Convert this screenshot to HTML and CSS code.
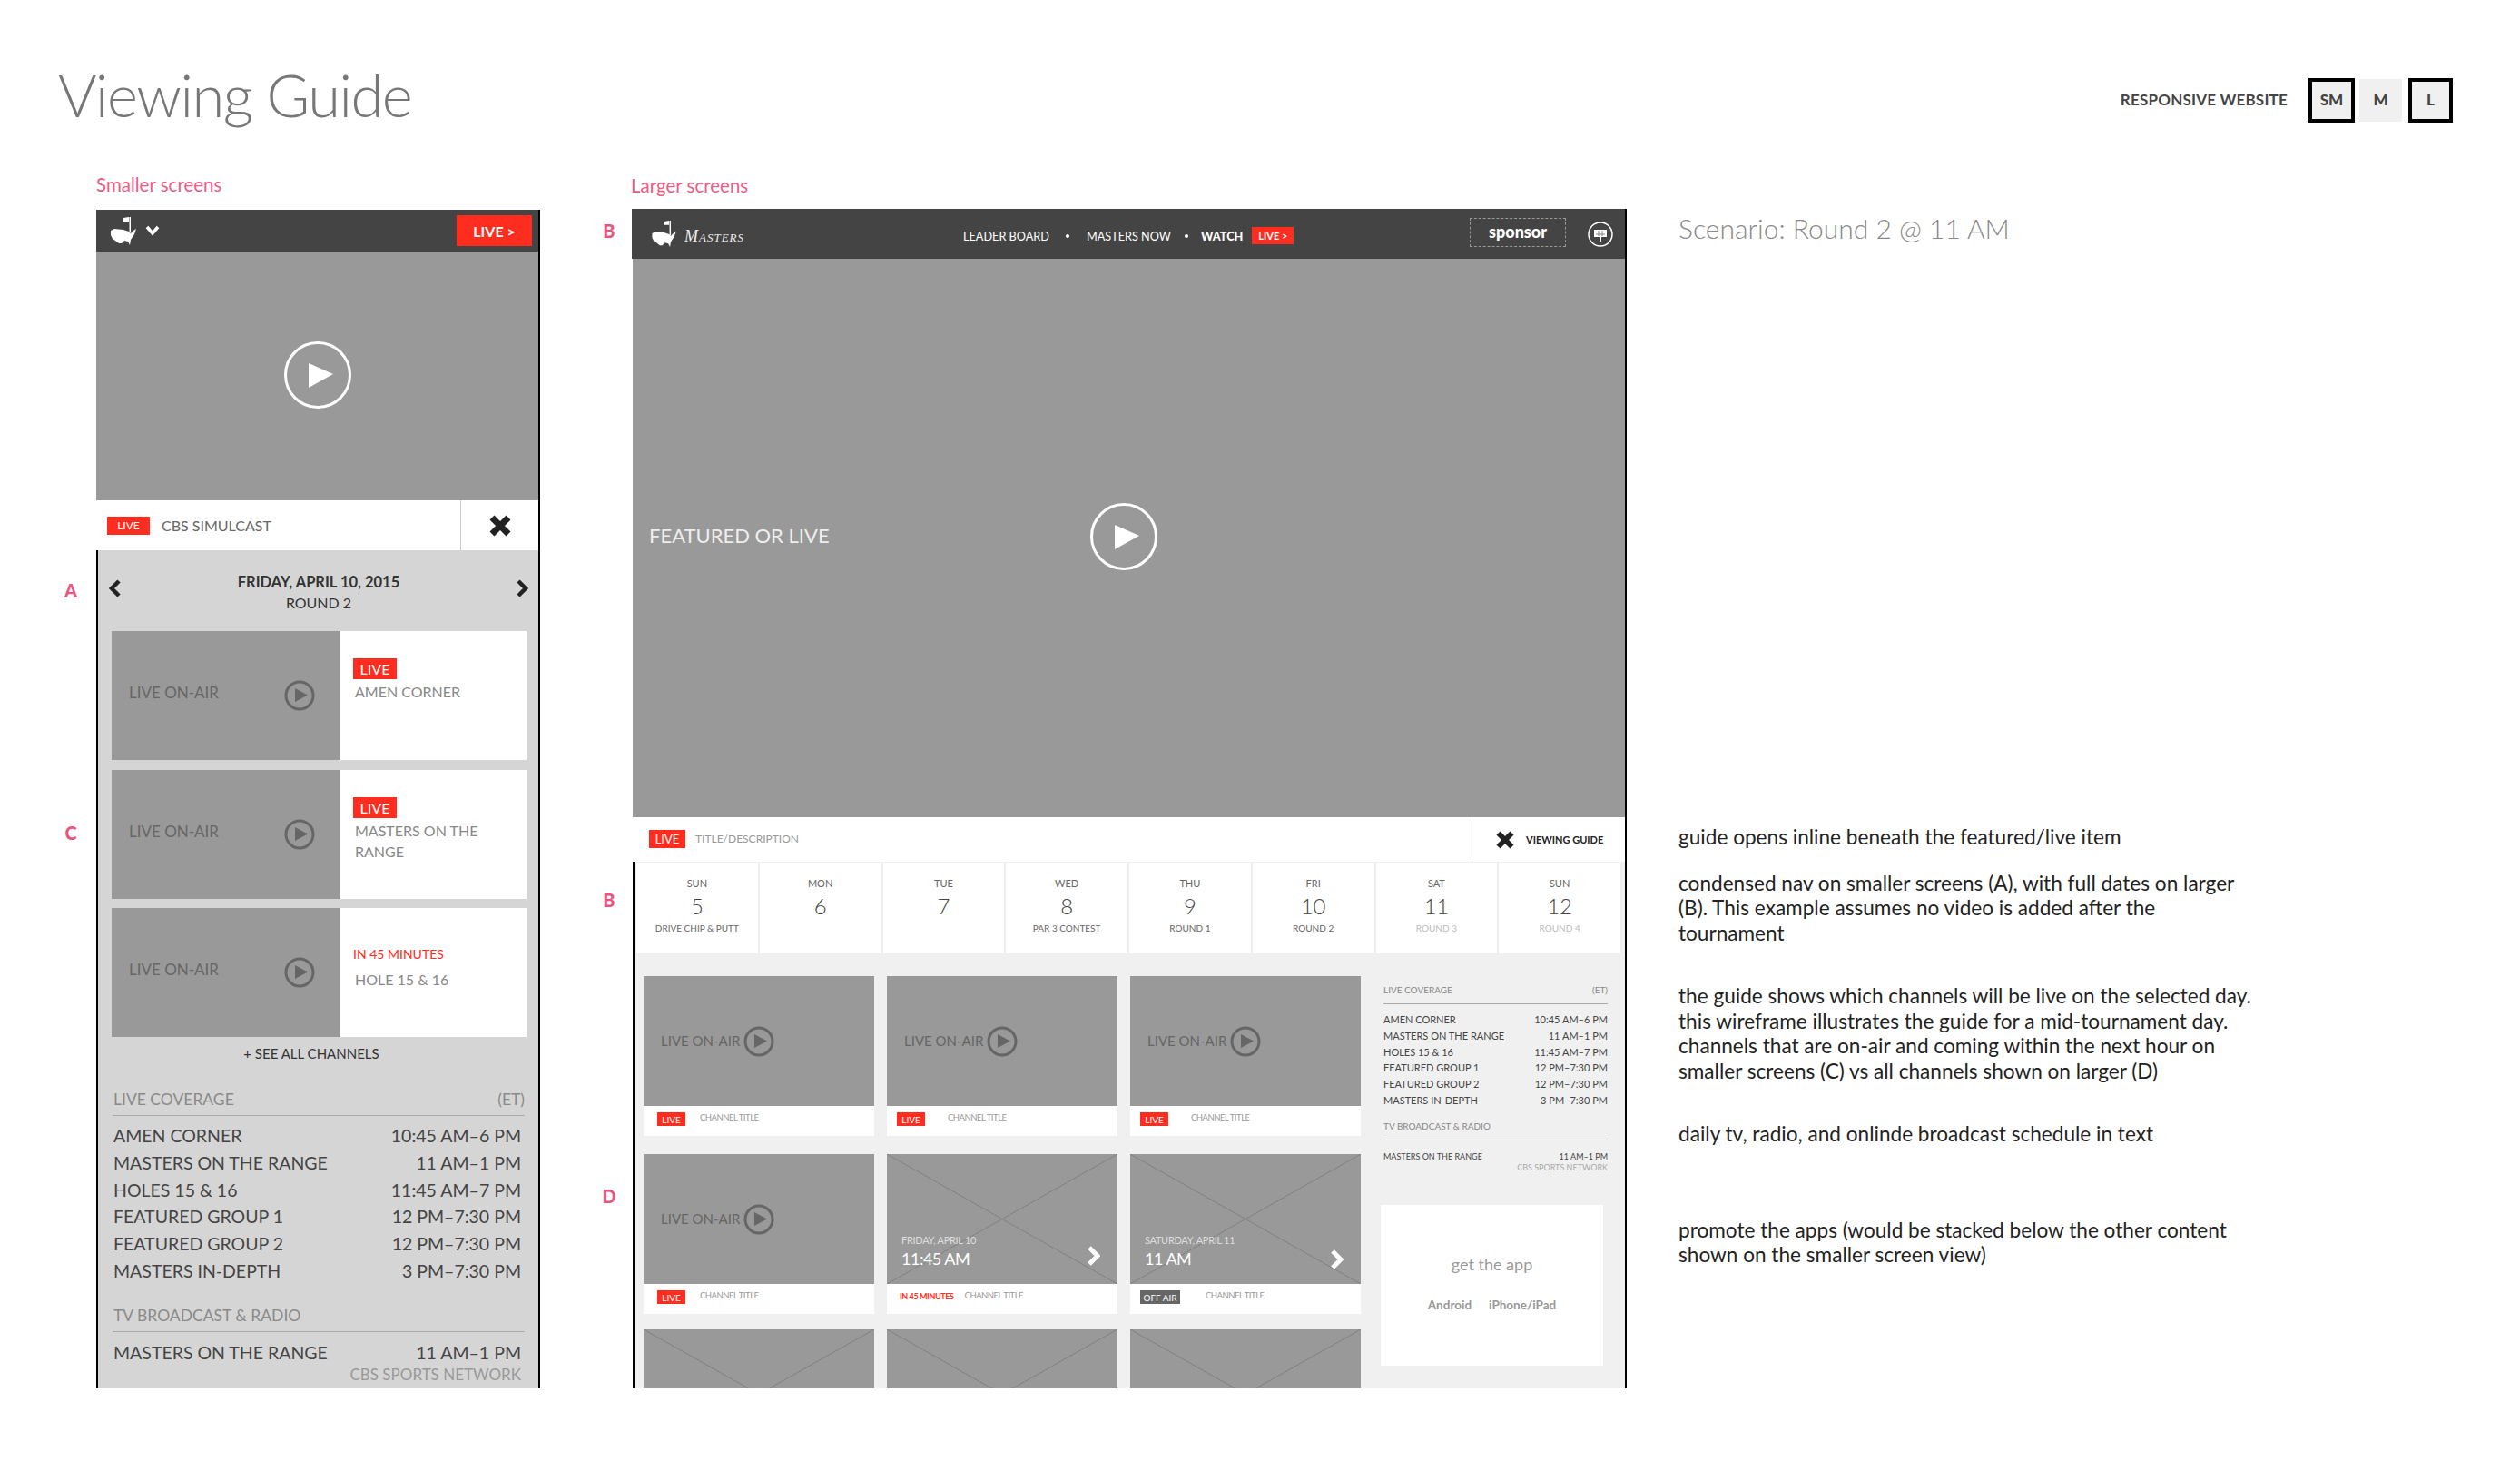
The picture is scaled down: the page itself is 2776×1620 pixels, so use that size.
FILE: index.html
```html
<!DOCTYPE html>
<html lang="en">
<head>
    <meta charset="UTF-8">
    <title>Viewing Guide</title>
    <link rel="stylesheet" href="styles.css">
</head>
<body>

    <svg class="sprite" xmlns="http://www.w3.org/2000/svg">
        <symbol id="logo" viewBox="0 0 28 31">
            <path d="M14 1 L20 0 L20 5 L14 5Z" fill="#fff"/>
            <path d="M20.5 0 H22 V17 H20.5Z" fill="#fff"/>
            <path d="M0 15 L4 13 L14 14 L20 16 L22 18 L25 15 L28 13 L26 19 L24 22 L22 25 L21 31 L19 27 L15 26 L12 29 L9 29 L5 26 L2 24 L0 20Z" fill="#fff"/>
        </symbol>
        <symbol id="play-big" viewBox="0 0 74 74">
            <circle cx="37" cy="37" r="35.5" fill="none" stroke="#fff" stroke-width="3"/>
            <path d="M27 24 L54 36 L27 51Z" fill="#fff"/>
        </symbol>
        <symbol id="play-small" viewBox="0 0 34 34">
            <circle cx="17" cy="17" r="15" fill="none" stroke="#666" stroke-width="3"/>
            <path d="M12 9 L26 16.5 L12 24Z" fill="#666"/>
        </symbol>
        <symbol id="close" viewBox="0 0 24 24">
            <path d="M3 3 L21 21 M21 3 L3 21" fill="none" stroke="#222" stroke-width="7"/>
        </symbol>
        <symbol id="chev-left" viewBox="0 0 14 20">
            <path d="M12 2 L4 10 L12 18" fill="none" stroke="#222" stroke-width="4.5"/>
        </symbol>
        <symbol id="chev-right" viewBox="0 0 14 20">
            <path d="M2 2 L10 10 L2 18" fill="none" stroke="#222" stroke-width="4.5"/>
        </symbol>
        <symbol id="chev-white" viewBox="0 0 14 22">
            <path d="M2 2 L11 11 L2 20" fill="none" stroke="#fff" stroke-width="5"/>
        </symbol>
        <symbol id="cross" viewBox="0 0 254 143" preserveAspectRatio="none">
            <path d="M0 0 L254 143 M254 0 L0 143" fill="none" stroke="#808080" stroke-width="1"/>
        </symbol>
    </svg>

    <div class="page">

        <header class="top">
            <h1 class="title">Viewing Guide</h1>
            <div class="sizes">
                <span class="sizes-label">RESPONSIVE WEBSITE</span>
                <span class="size size-on size-sm">SM</span>
                <span class="size size-m">M</span>
                <span class="size size-on size-l">L</span>
            </div>
        </header>

        <main class="board">

            <div class="gutter gutter-small">
                <span class="mark mark-a">A</span>
                <span class="mark mark-c">C</span>
            </div>

            <section class="small-col">
                <div class="screen-label">Smaller screens</div>
                <div class="small-screen">
                    <div class="small-bar">
                        <svg class="small-logo"><use href="#logo"/></svg>
                        <svg class="small-caret" viewBox="0 0 16 12"><path d="M2 2 L8 9 L14 2" fill="none" stroke="#fff" stroke-width="3.5"/></svg>
                        <span class="small-live">LIVE &gt;</span>
                    </div>
                    <div class="small-video">
                        <svg class="play-big"><use href="#play-big"/></svg>
                    </div>
                    <div class="small-info">
                        <span class="tag small-info-tag">LIVE</span>
                        <span class="small-info-text">CBS SIMULCAST</span>
                        <span class="small-close"><svg class="close-big"><use href="#close"/></svg></span>
                    </div>
                    <div class="small-guide">
                        <div class="small-date">
                            <svg class="date-arrow"><use href="#chev-left"/></svg>
                            <div class="date-text">
                                <div class="date-day">FRIDAY, APRIL 10, 2015</div>
                                <div class="date-round">ROUND 2</div>
                            </div>
                            <svg class="date-arrow"><use href="#chev-right"/></svg>
                        </div>
                        <div class="cards">
                            <div class="card">
                                <div class="card-thumb">
                                    <span class="card-onair">LIVE ON-AIR</span>
                                    <svg class="play-small"><use href="#play-small"/></svg>
                                </div>
                                <div class="card-body">
                                    <span class="tag card-tag">LIVE</span>
                                    <div class="card-title">AMEN CORNER</div>
                                </div>
                            </div>
                            <div class="card">
                                <div class="card-thumb">
                                    <span class="card-onair">LIVE ON-AIR</span>
                                    <svg class="play-small"><use href="#play-small"/></svg>
                                </div>
                                <div class="card-body">
                                    <span class="tag card-tag">LIVE</span>
                                    <div class="card-title">MASTERS ON THE RANGE</div>
                                </div>
                            </div>
                            <div class="card">
                                <div class="card-thumb">
                                    <span class="card-onair">LIVE ON-AIR</span>
                                    <svg class="play-small"><use href="#play-small"/></svg>
                                </div>
                                <div class="card-body card-body-soon">
                                    <div class="card-soon">IN 45 MINUTES</div>
                                    <div class="card-title card-title-soon">HOLE 15 &amp; 16</div>
                                </div>
                            </div>
                        </div>
                        <div class="see-all">+ SEE ALL CHANNELS</div>
                        <div class="sched">
                            <div class="sched-head"><span>LIVE COVERAGE</span><span>(ET)</span></div>
                            <div class="sched-row"><span>AMEN CORNER</span><span>10:45 AM–6 PM</span></div>
                            <div class="sched-row"><span>MASTERS ON THE RANGE</span><span>11 AM–1 PM</span></div>
                            <div class="sched-row"><span>HOLES 15 &amp; 16</span><span>11:45 AM–7 PM</span></div>
                            <div class="sched-row"><span>FEATURED GROUP 1</span><span>12 PM–7:30 PM</span></div>
                            <div class="sched-row"><span>FEATURED GROUP 2</span><span>12 PM–7:30 PM</span></div>
                            <div class="sched-row"><span>MASTERS IN-DEPTH</span><span>3 PM–7:30 PM</span></div>
                            <div class="sched-head sched-head-tv"><span>TV BROADCAST &amp; RADIO</span></div>
                            <div class="sched-row sched-row-tv"><span>MASTERS ON THE RANGE</span><span>11 AM–1 PM</span></div>
                            <div class="sched-net">CBS SPORTS NETWORK</div>
                        </div>
                    </div>
                </div>
            </section>

            <div class="gutter gutter-large">
                <span class="mark mark-b1">B</span>
                <span class="mark mark-b2">B</span>
                <span class="mark mark-d">D</span>
            </div>

            <section class="large-col">
                <div class="screen-label screen-label-large">Larger screens</div>
                <div class="large-screen">
                    <div class="large-bar">
                        <svg class="large-logo"><use href="#logo"/></svg>
                        <span class="large-brand">Masters</span>
                        <nav class="large-nav">
                            <span>LEADER BOARD</span>
                            <span class="nav-dot"></span>
                            <span>MASTERS NOW</span>
                            <span class="nav-dot nav-dot-tight"></span>
                            <strong class="nav-watch">WATCH</strong>
                            <span class="large-live">LIVE &gt;</span>
                        </nav>
                        <span class="sponsor">sponsor</span>
                        <svg class="board-icon" viewBox="0 0 28 28">
                            <circle cx="14" cy="14" r="13" fill="none" stroke="#fff" stroke-width="1.5"/>
                            <rect x="7" y="9" width="14" height="8" fill="#fff"/>
                            <path d="M9 11.5 H19 M9 14 H19 M12 10 V16 M16 10 V16" stroke="#888" stroke-width="1"/>
                            <rect x="13" y="17" width="2" height="5" fill="#fff"/>
                        </svg>
                    </div>
                    <div class="large-video">
                        <span class="large-video-text">FEATURED OR LIVE</span>
                        <svg class="play-big large-play"><use href="#play-big"/></svg>
                    </div>
                    <div class="large-info">
                        <span class="tag large-info-tag">LIVE</span>
                        <span class="large-info-text">TITLE/DESCRIPTION</span>
                        <span class="large-close">
                            <svg class="close-small"><use href="#close"/></svg>
                            <b>VIEWING GUIDE</b>
                        </span>
                    </div>
                    <div class="large-guide">
                        <div class="days">
                            <div class="day"><div class="day-name">SUN</div><div class="day-num">5</div><div class="day-sub">DRIVE CHIP &amp; PUTT</div></div>
                            <div class="day"><div class="day-name">MON</div><div class="day-num">6</div></div>
                            <div class="day"><div class="day-name">TUE</div><div class="day-num">7</div></div>
                            <div class="day"><div class="day-name">WED</div><div class="day-num">8</div><div class="day-sub">PAR 3 CONTEST</div></div>
                            <div class="day"><div class="day-name">THU</div><div class="day-num">9</div><div class="day-sub">ROUND 1</div></div>
                            <div class="day"><div class="day-name">FRI</div><div class="day-num">10</div><div class="day-sub">ROUND 2</div></div>
                            <div class="day"><div class="day-name">SAT</div><div class="day-num">11</div><div class="day-sub day-sub-off">ROUND 3</div></div>
                            <div class="day"><div class="day-name">SUN</div><div class="day-num">12</div><div class="day-sub day-sub-off">ROUND 4</div></div>
                        </div>
                        <div class="large-body">
                            <div class="tiles">
                                <div class="tile">
                                    <div class="tile-thumb"><span class="tile-onair">LIVE ON-AIR</span><svg class="play-small"><use href="#play-small"/></svg></div>
                                    <div class="tile-foot foot-first"><span class="tag tile-tag">LIVE</span><span class="tile-title">CHANNEL TITLE</span></div>
                                </div>
                                <div class="tile">
                                    <div class="tile-thumb"><span class="tile-onair">LIVE ON-AIR</span><svg class="play-small"><use href="#play-small"/></svg></div>
                                    <div class="tile-foot"><span class="tag tile-tag">LIVE</span><span class="tile-title">CHANNEL TITLE</span></div>
                                </div>
                                <div class="tile">
                                    <div class="tile-thumb"><span class="tile-onair">LIVE ON-AIR</span><svg class="play-small"><use href="#play-small"/></svg></div>
                                    <div class="tile-foot"><span class="tag tile-tag">LIVE</span><span class="tile-title">CHANNEL TITLE</span></div>
                                </div>
                                <div class="tile">
                                    <div class="tile-thumb"><span class="tile-onair">LIVE ON-AIR</span><svg class="play-small"><use href="#play-small"/></svg></div>
                                    <div class="tile-foot foot-first"><span class="tag tile-tag">LIVE</span><span class="tile-title">CHANNEL TITLE</span></div>
                                </div>
                                <div class="tile">
                                    <div class="tile-thumb tile-later">
                                        <svg class="tile-cross"><use href="#cross"/></svg>
                                        <div class="later-text"><div class="later-date">FRIDAY, APRIL 10</div><div class="later-time">11:45 AM</div></div>
                                        <svg class="later-chev"><use href="#chev-white"/></svg>
                                    </div>
                                    <div class="tile-foot foot-soon"><span class="tile-soon">IN 45 MINUTES</span><span class="tile-title">CHANNEL TITLE</span></div>
                                </div>
                                <div class="tile">
                                    <div class="tile-thumb tile-later">
                                        <svg class="tile-cross"><use href="#cross"/></svg>
                                        <div class="later-text"><div class="later-date">SATURDAY, APRIL 11</div><div class="later-time">11 AM</div></div>
                                        <svg class="later-chev later-chev-low"><use href="#chev-white"/></svg>
                                    </div>
                                    <div class="tile-foot foot-off"><span class="tag tag-off tile-tag">OFF AIR</span><span class="tile-title">CHANNEL TITLE</span></div>
                                </div>
                                <div class="tile tile-cut"><div class="tile-thumb tile-later"><svg class="tile-cross"><use href="#cross"/></svg></div></div>
                                <div class="tile tile-cut"><div class="tile-thumb tile-later"><svg class="tile-cross"><use href="#cross"/></svg></div></div>
                                <div class="tile tile-cut"><div class="tile-thumb tile-later"><svg class="tile-cross"><use href="#cross"/></svg></div></div>
                            </div>
                            <aside class="side">
                                <div class="side-head"><span>LIVE COVERAGE</span><span>(ET)</span></div>
                                <div class="side-row"><span>AMEN CORNER</span><span>10:45 AM–6 PM</span></div>
                                <div class="side-row"><span>MASTERS ON THE RANGE</span><span>11 AM–1 PM</span></div>
                                <div class="side-row"><span>HOLES 15 &amp; 16</span><span>11:45 AM–7 PM</span></div>
                                <div class="side-row"><span>FEATURED GROUP 1</span><span>12 PM–7:30 PM</span></div>
                                <div class="side-row"><span>FEATURED GROUP 2</span><span>12 PM–7:30 PM</span></div>
                                <div class="side-row"><span>MASTERS IN-DEPTH</span><span>3 PM–7:30 PM</span></div>
                                <div class="side-head side-head-tv"><span>TV BROADCAST &amp; RADIO</span></div>
                                <div class="side-row side-row-tv"><span>MASTERS ON THE RANGE</span><span>11 AM–1 PM</span></div>
                                <div class="side-net">CBS SPORTS NETWORK</div>
                                <div class="app-box">
                                    <div class="app-title">get the app</div>
                                    <div class="app-links"><b>Android</b><b>iPhone/iPad</b></div>
                                </div>
                            </aside>
                        </div>
                    </div>
                </div>
            </section>

            <section class="notes">
                <h2 class="scenario">Scenario: Round 2 @ 11 AM</h2>
                <p class="note note-1">guide opens inline beneath the featured/live item</p>
                <p class="note note-2">condensed nav on smaller screens (A), with full dates on larger<br>(B). This example assumes no video is added after the<br>tournament</p>
                <p class="note note-3">the guide shows which channels will be live on the selected day.<br>this wireframe illustrates the guide for a mid-tournament day.<br>channels that are on-air and coming within the next hour on<br>smaller screens (C) vs all channels shown on larger (D)</p>
                <p class="note note-4">daily tv, radio, and onlinde broadcast schedule in text</p>
                <p class="note note-5">promote the apps (would be stacked below the other content<br>shown on the smaller screen view)</p>
            </section>

        </main>
    </div>

</body>
</html>
```

FILE: styles.css
```css
* {
    box-sizing: border-box;
}
body {
    margin: 0;
    background-color: #fff;
    font-family: Lato, "Open Sans", sans-serif;
    color: #444;
}
.sprite {
    display: none;
}
svg {
    display: block;
}
.page {
    width: 2776px;
    height: 1620px;
    overflow: hidden;
}

/* top row */
.top {
    height: 190px;
    display: flex;
    justify-content: space-between;
    align-items: flex-start;
    padding: 0 74px 0 64px;
}
.title {
    margin: 66px 0 0;
    font-size: 65px;
    line-height: 76px;
    font-weight: 300;
    letter-spacing: -1.5px;
    color: #777;
}
.sizes {
    display: flex;
    align-items: center;
    margin-top: 86px;
}
.sizes-label {
    font-size: 17px;
    font-weight: 700;
    letter-spacing: 0.2px;
    margin-right: 23px;
    padding-bottom: 3px;
}
.size {
    display: flex;
    align-items: center;
    justify-content: center;
    background-color: #f0f0f0;
    font-size: 17px;
    font-weight: 900;
    padding-bottom: 2px;
    height: 47px;
}
.size-on {
    height: 49px;
    border: 4px solid #000;
}
.size-sm {
    width: 51px;
}
.size-m {
    width: 47px;
    margin: 0 7px 0 5px;
}
.size-l {
    width: 49px;
}

/* columns */
.board {
    display: flex;
    align-items: flex-start;
}
.gutter {
    display: flex;
    flex-direction: column;
}
.gutter-small {
    width: 106px;
    padding-left: 66px;
}
.gutter-large {
    width: 101px;
    padding-left: 64px;
}
.mark {
    width: 24px;
    text-align: center;
    font-size: 20px;
    line-height: 24px;
    font-weight: 900;
    color: #e8567f;
}
.mark-a { margin-top: 448px; }
.mark-c { margin-top: 243px; }
.mark-b1 { margin-top: 52px; }
.mark-b2 { margin-top: 713px; }
.mark-d { margin-top: 302px; }

.screen-label {
    height: 41px;
    font-size: 20.5px;
    line-height: 27px;
    color: #ec5d86;
}
.screen-label-large {
    height: 40px;
    padding-top: 1px;
    margin-left: -1px;
}

.tag {
    display: flex;
    align-items: center;
    justify-content: center;
    background-color: #ff2d20;
    color: #fff;
}
.tag-off {
    background-color: #666;
}

/* smaller screen */
.small-col {
    width: 489px;
}
.small-screen {
    height: 1298px;
    overflow: hidden;
    border-right: 2px solid #000;
}
.small-bar {
    height: 46px;
    background-color: #444;
    display: flex;
    align-items: center;
    padding: 0 7px 0 16px;
}
.small-logo {
    width: 28px;
    height: 31px;
}
.small-caret {
    width: 16px;
    height: 12px;
    margin-left: 10px;
}
.small-live {
    margin-left: auto;
    width: 83px;
    height: 34px;
    background-color: #ff2d20;
    color: #fff;
    font-size: 16px;
    font-weight: 700;
    display: flex;
    align-items: center;
    justify-content: center;
}
.small-video {
    height: 274px;
    background-color: #999;
    display: flex;
    align-items: center;
    justify-content: center;
    padding-bottom: 2px;
}
.play-big {
    width: 74px;
    height: 74px;
}
.small-info {
    height: 55px;
    display: flex;
    align-items: center;
    background-color: #fff;
}
.small-info-tag {
    width: 47px;
    height: 20px;
    margin-left: 12px;
    font-size: 12px;
}
.small-info-text {
    margin-left: 13px;
    font-size: 16px;
    color: #666;
}
.small-close {
    margin-left: auto;
    width: 86px;
    height: 100%;
    border-left: 1px solid #ccc;
    display: flex;
    align-items: center;
    justify-content: center;
}
.close-big {
    width: 24px;
    height: 24px;
}
.small-guide {
    height: 923px;
    background-color: #d5d5d5;
    border-left: 2px solid #000;
}
.small-date {
    height: 89px;
    display: flex;
    align-items: center;
    justify-content: space-between;
    padding: 0 10px 5px 11px;
}
.date-arrow {
    width: 14px;
    height: 20px;
}
.date-text {
    text-align: center;
    margin-top: 9px;
}
.date-day {
    font-size: 16.5px;
    line-height: 22px;
    font-weight: 700;
    color: #333;
}
.date-round {
    font-size: 16px;
    line-height: 23px;
    color: #333;
}
.cards {
    display: flex;
    flex-direction: column;
    gap: 10.5px;
    margin-left: 15px;
    width: 457px;
}
.card {
    height: 142px;
    display: flex;
}
.card-thumb {
    width: 252px;
    background-color: #999;
    display: flex;
    align-items: center;
    justify-content: space-between;
    padding: 0 28px 0 19px;
}
.card-onair {
    font-size: 17px;
    color: #666;
    margin-bottom: 7px;
}
.play-small {
    width: 34px;
    height: 34px;
    flex: none;
}
.card-body {
    flex: 1;
    background-color: #fff;
    padding: 30px 10px 0 14px;
}
.card-tag {
    width: 48px;
    height: 23px;
    font-size: 16px;
}
.card-title {
    margin: 2px 0 0 2px;
    font-size: 16px;
    line-height: 23px;
    color: #888;
}
.card-body-soon {
    padding-top: 41px;
}
.card-soon {
    font-size: 14px;
    line-height: 20px;
    color: #ff2d20;
}
.card-title-soon {
    margin-top: 6px;
}
.see-all {
    margin: 8px 0 0 15px;
    width: 440px;
    text-align: center;
    font-size: 15px;
    line-height: 20px;
    color: #333;
}

.sched {
    margin: 0 0 0 16px;
    width: 454px;
}
.sched-head {
    display: flex;
    justify-content: space-between;
    margin-top: 30px;
    padding: 0 0 6px 1px;
    border-bottom: 1px solid #aaa;
    font-size: 17.5px;
    line-height: 22px;
    color: #8a8a8a;
}
.sched-head-tv {
    margin-top: 24px;
}
.sched-row {
    height: 29.7px;
    display: flex;
    justify-content: space-between;
    align-items: center;
    padding: 0 4px 0 1px;
    font-size: 19.5px;
    color: #444;
}
.sched-head + .sched-row {
    margin-top: 7px;
}
.sched-head-tv + .sched-row {
    margin-top: 8px;
}
.sched-net {
    margin-top: -1px;
    padding-right: 4px;
    text-align: right;
    font-size: 17px;
    line-height: 20px;
    color: #999;
}

/* larger screen */
.large-col {
    width: 1096px;
}
.large-screen {
    height: 1299px;
    overflow: hidden;
    border-right: 2px solid #000;
}
.large-bar {
    height: 55px;
    background-color: #444;
    display: flex;
    align-items: center;
    padding-left: 22px;
}
.large-logo {
    width: 27px;
    height: 29px;
}
.large-brand {
    margin: 6px 0 0 9px;
    width: 70px;
    font-family: "Liberation Serif", serif;
    font-style: italic;
    font-variant: small-caps;
    font-size: 18px;
    letter-spacing: 1px;
    color: #eee;
}
.large-nav {
    display: flex;
    align-items: center;
    margin: 4px 0 0 237px;
    font-size: 12.7px;
    color: #fff;
}
.nav-dot {
    width: 4px;
    height: 4px;
    border-radius: 50%;
    background-color: #fff;
    margin: 0 18.5px;
}
.nav-dot-tight {
    margin: 0 14px 0 15px;
}
.nav-watch {
    font-weight: 900;
}
.large-live {
    margin-left: 10px;
    width: 46px;
    height: 19px;
    background-color: #ff2d20;
    font-size: 11px;
    font-weight: 700;
    display: flex;
    align-items: center;
    justify-content: center;
}
.sponsor {
    margin: 0 0 3px auto;
    width: 106px;
    height: 32px;
    border: 1px dashed #999;
    color: #fff;
    font-size: 18px;
    font-weight: 900;
    padding-bottom: 3px;
    display: flex;
    align-items: center;
    justify-content: center;
}
.board-icon {
    width: 28px;
    height: 28px;
    margin: 0 13px 0 24px;
}
.large-video {
    height: 615px;
    margin-left: 1px;
    background-color: #999;
    display: flex;
    align-items: center;
    padding: 0 0 4px 18px;
}
.large-video-text {
    width: 486px;
    margin-bottom: 2px;
    font-size: 22px;
    color: #eee;
}
.large-info {
    height: 49px;
    display: flex;
    align-items: center;
    background-color: #fff;
    padding-left: 19px;
}
.large-info-tag {
    width: 40px;
    height: 20px;
    margin-bottom: 2px;
    font-size: 13px;
}
.large-info-text {
    margin: 0 0 3px 11px;
    font-size: 12px;
    color: #999;
}
.large-close {
    margin-left: auto;
    width: 169px;
    height: 100%;
    border-left: 1px solid #ddd;
    display: flex;
    align-items: center;
    padding-left: 26px;
    color: #222;
    font-size: 11px;
}
.close-small {
    width: 20px;
    height: 20px;
    margin-right: 13px;
}
.large-guide {
    height: 580px;
    margin-left: 1px;
    background-color: #f0f0f0;
    border-left: 2px solid #000;
    padding-top: 1px;
}
.days {
    height: 100px;
    display: flex;
    margin-left: 2px;
    width: 1086px;
    background-color: #fff;
}
.day {
    flex: 1;
    border-right: 2px solid #eee;
    padding-top: 16px;
    text-align: center;
    color: #666;
}
.day-name {
    font-size: 11px;
    line-height: 14px;
}
.day-num {
    margin-top: 3px;
    font-size: 24px;
    line-height: 30px;
    font-weight: 300;
    color: #444;
}
.day-sub {
    margin-top: 2px;
    font-size: 10px;
    line-height: 14px;
}
.day-sub-off {
    color: #bbb;
}
.large-body {
    display: flex;
    padding: 25px 0 0 10px;
}
.tiles {
    display: grid;
    grid-template-columns: repeat(3, 254px);
    column-gap: 14px;
    row-gap: 20px;
    align-content: start;
}
.tile {
    background-color: #fff;
}
.tile-cut {
    margin-top: -3px;
}
.tile-thumb {
    height: 143px;
    background-color: #999;
    display: flex;
    align-items: center;
    padding-left: 19px;
}
.tile-onair {
    font-size: 15px;
    color: #666;
    margin: 0 4px 2px 0;
}
.tile-later {
    position: relative;
    align-items: flex-end;
    justify-content: space-between;
    padding: 0 19px 16px 16px;
}
.tile-cross {
    position: absolute;
    left: 0;
    top: 0;
    width: 100%;
    height: 100%;
}
.later-text {
    position: relative;
}
.later-date {
    font-size: 11px;
    line-height: 16px;
    letter-spacing: -0.3px;
    color: #ddd;
}
.later-time {
    font-size: 18px;
    line-height: 24px;
    letter-spacing: -0.5px;
    color: #fff;
}
.later-chev {
    position: relative;
    width: 14px;
    height: 22px;
    margin-bottom: 4px;
}
.later-chev-low {
    margin-bottom: 0;
}
.tile-foot {
    height: 33px;
    display: flex;
    align-items: flex-start;
    padding: 7px 0 0 11px;
    gap: 25px;
    font-size: 9.5px;
}
.foot-first {
    padding-left: 15px;
    gap: 16px;
}
.foot-soon {
    padding-left: 14px;
    gap: 12px;
}
.foot-off {
    gap: 28px;
}
.tile-tag {
    width: 31px;
    height: 15px;
    font-size: 10px;
}
.foot-off .tile-tag {
    width: 44px;
}
.tile-title {
    letter-spacing: -0.5px;
    color: #999;
}
.tile-soon {
    color: #ff2d20;
    margin-top: 1px;
    font-size: 9px;
    font-weight: 700;
    letter-spacing: -0.4px;
}
.side {
    margin-left: 25px;
    width: 247px;
}
.side-head {
    display: flex;
    justify-content: space-between;
    margin-top: 8px;
    padding-bottom: 8px;
    border-bottom: 1px solid #aaa;
    font-size: 10px;
    line-height: 14px;
    color: #888;
}
.side-head-tv {
    margin-top: 13px;
}
.side-row {
    height: 17.7px;
    display: flex;
    justify-content: space-between;
    align-items: center;
    font-size: 11px;
    color: #444;
}
.side-head + .side-row {
    margin-top: 8px;
}
.side-row-tv {
    height: 14px;
    font-size: 9px;
}
.side-head + .side-row-tv {
    margin-top: 10px;
}
.side-net {
    text-align: right;
    font-size: 9px;
    line-height: 12px;
    color: #aaa;
}
.app-box {
    margin: 35px 0 0 -3px;
    width: 245px;
    height: 177px;
    background-color: #fff;
    padding-top: 53px;
    text-align: center;
    color: #999;
}
.app-title {
    font-size: 18px;
    line-height: 24px;
}
.app-links {
    margin-top: 25px;
    display: flex;
    justify-content: center;
    gap: 19px;
    font-size: 13.5px;
    line-height: 16px;
}

/* notes on the right */
.notes {
    margin-left: 57px;
    width: 650px;
    padding-top: 41px;
}
.scenario {
    margin: 0;
    font-size: 30px;
    line-height: 40px;
    font-weight: 300;
    color: #888;
}
.note {
    margin: 0;
    font-size: 22.6px;
    line-height: 27.5px;
    color: #222;
}
.note-1 { margin-top: 637px; }
.note-2 { margin-top: 23px; }
.note-3 { margin-top: 42px; }
.note-4 { margin-top: 42px; }
.note-5 { margin-top: 78px; }
```
